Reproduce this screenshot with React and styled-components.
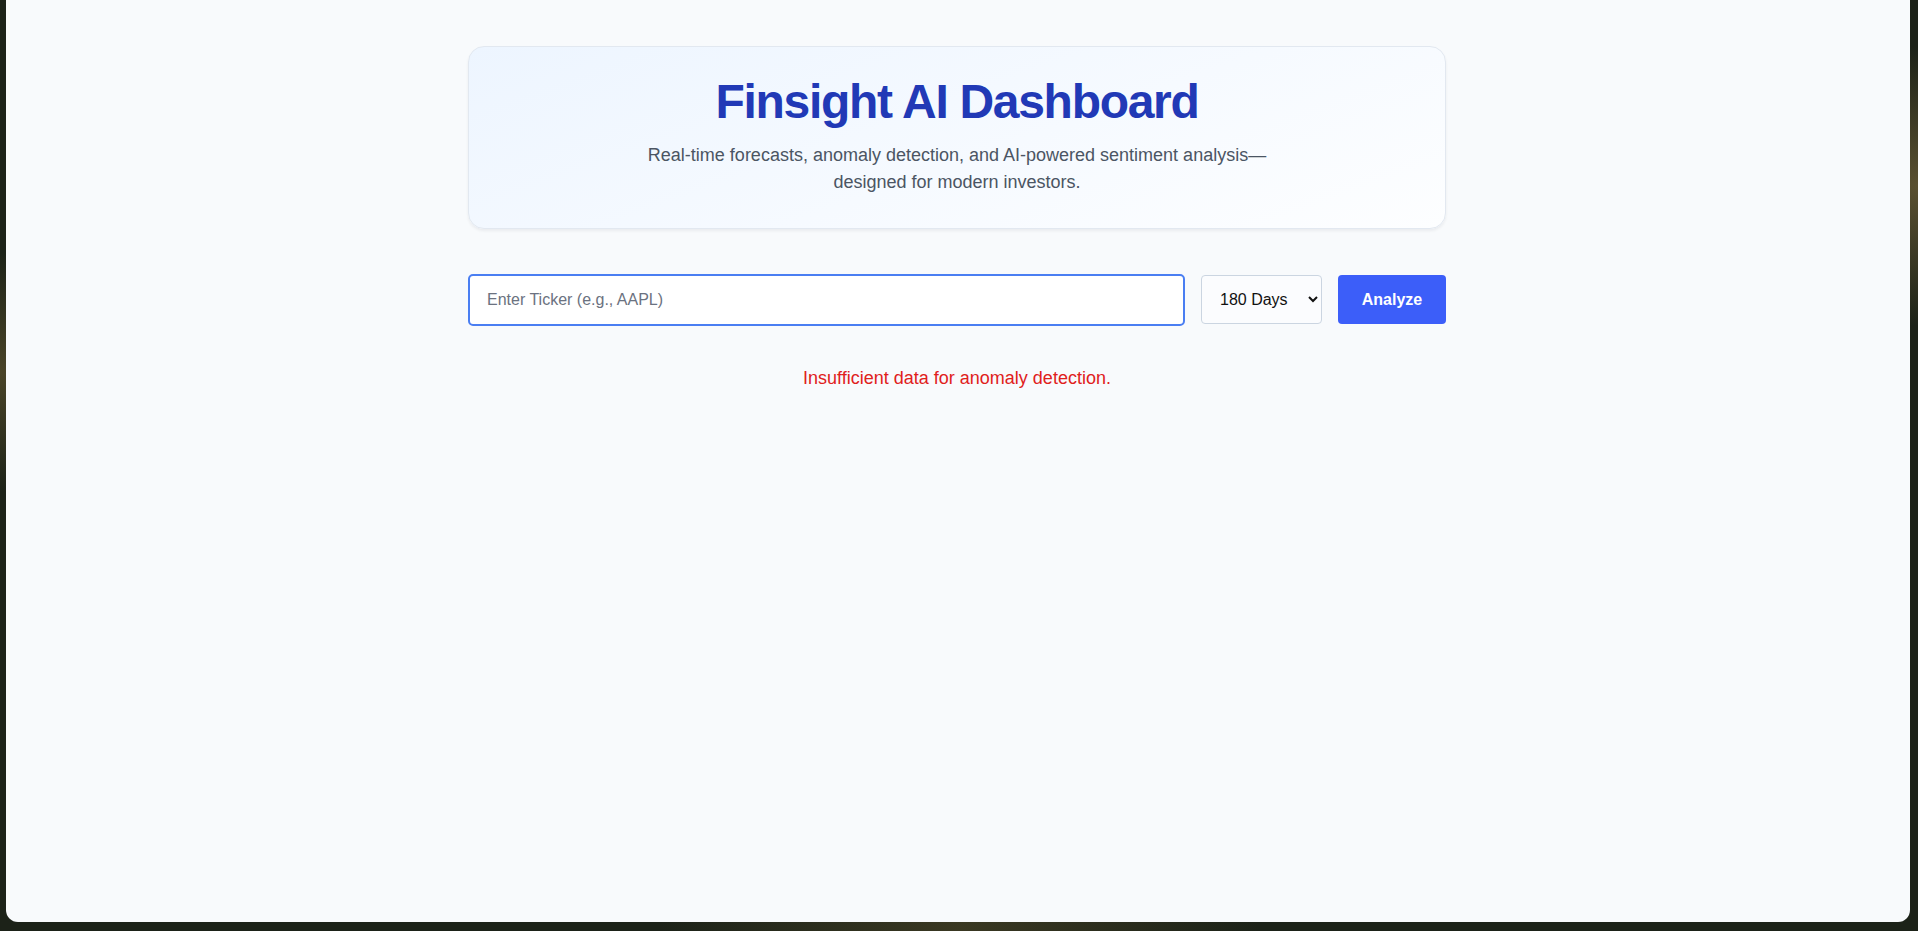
import React, { useState } from "react"
import styled, { createGlobalStyle } from "styled-components"

const GlobalStyle = createGlobalStyle`
  html, body {
    margin: 0;
    padding: 0;
    height: 100%;
  }
  body {
    font-family: "Liberation Sans", Arial, Helvetica, sans-serif;
    background:
      radial-gradient(circle at 0% 40%, #4a4428 0, transparent 120px),
      radial-gradient(circle at 100% 20%, #5a5030 0, transparent 140px),
      radial-gradient(circle at 50% 100%, #3a3822 0, transparent 300px),
      #1c2218;
  }
`

const Desktop = styled.div`
  padding: 0 8px 9px 6px;
  height: 100vh;
  box-sizing: border-box;
`

const Window = styled.div`
  height: 100%;
  background: #f8fafc;
  border-radius: 0 0 12px 12px;
  overflow: hidden;
`

const Container = styled.main`
  max-width: 978px;
  margin: 0 auto;
  padding-top: 46px;
  transform: translateX(-1px);
`

const HeroCard = styled.header`
  background: linear-gradient(160deg, #edf5ff 0%, #f6faff 55%, #fdfeff 100%);
  border: 1px solid #e2e8f0;
  border-radius: 16px;
  box-shadow: 0 2px 3px rgba(15, 23, 42, 0.06);
  padding: 26px 32px 32px;
  text-align: center;
`

const Title = styled.h1`
  margin: 0 0 11px;
  font-size: 48px;
  line-height: 57.6px;
  letter-spacing: -1.3px;
  font-weight: 700;
  color: #2139b6;
`

const Subtitle = styled.p`
  margin: 0 auto;
  max-width: 640px;
  font-size: 18px;
  line-height: 27px;
  color: #4b5563;
`

const SearchRow = styled.form`
  display: flex;
  align-items: center;
  gap: 16px;
  margin-top: 45px;
`

const TickerInput = styled.input`
  flex: 1;
  height: 52px;
  box-sizing: border-box;
  padding: 0 17px;
  border: 2px solid #4a7ef2;
  border-radius: 5px;
  background: #ffffff;
  font-family: inherit;
  font-size: 16px;
  color: #111827;
  outline: none;

  &::placeholder {
    color: #6b7280;
  }
`

const RangeSelect = styled.select`
  width: 121px;
  height: 49px;
  box-sizing: border-box;
  padding: 0 10px 0 14px;
  border: 1px solid #cbd5e1;
  border-radius: 4px;
  background: #fbfcfe;
  font-family: inherit;
  font-size: 16px;
  color: #111111;
`

const AnalyzeButton = styled.button`
  width: 108px;
  height: 49px;
  border: none;
  border-radius: 4px;
  background: #3c5ef9;
  color: #ffffff;
  font-family: inherit;
  font-size: 16px;
  font-weight: 700;
  cursor: pointer;

  &:hover {
    background: #2f4fe6;
  }
`

const ErrorText = styled.p`
  margin: 39px 0 0;
  text-align: center;
  font-size: 18px;
  line-height: 27px;
  color: #e0201b;
`

export default function App() {
  const [ticker, setTicker] = useState("")
  const [days, setDays] = useState("180")

  return (
    <>
      <GlobalStyle />
      <Desktop>
        <Window>
          <Container>
            <HeroCard>
              <Title>Finsight AI Dashboard</Title>
              <Subtitle>
                Real-time forecasts, anomaly detection, and AI-powered sentiment
                analysis—designed for modern investors.
              </Subtitle>
            </HeroCard>

            <SearchRow onSubmit={e => e.preventDefault()}>
              <TickerInput
                placeholder="Enter Ticker (e.g., AAPL)"
                value={ticker}
                onChange={e => setTicker(e.target.value)}
              />
              <RangeSelect value={days} onChange={e => setDays(e.target.value)}>
                <option value="30">30 Days</option>
                <option value="90">90 Days</option>
                <option value="180">180 Days</option>
                <option value="365">365 Days</option>
              </RangeSelect>
              <AnalyzeButton type="submit">Analyze</AnalyzeButton>
            </SearchRow>

            <ErrorText>Insufficient data for anomaly detection.</ErrorText>
          </Container>
        </Window>
      </Desktop>
    </>
  )
}
